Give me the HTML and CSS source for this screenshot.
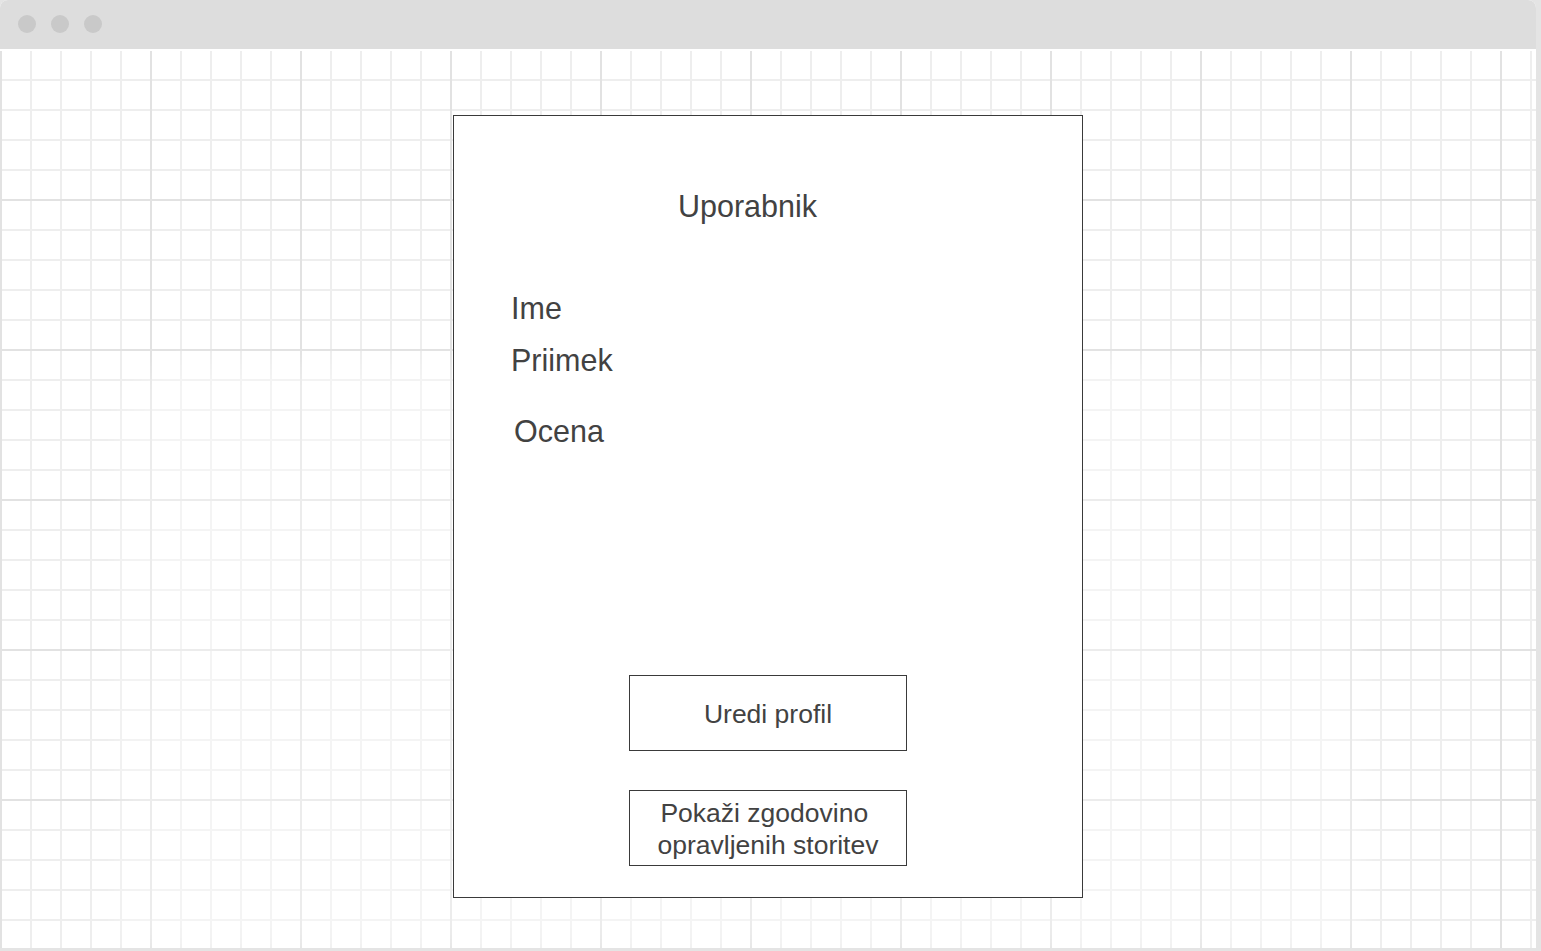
FILE: index.html
```html
<!DOCTYPE html>
<html lang="sl">
<head>
<meta charset="utf-8">
<title>Uporabnik</title>
<link rel="stylesheet" href="styles.css">
</head>
<body>
<div class="window">
  <div class="titlebar">
    <span class="dot"></span>
    <span class="dot"></span>
    <span class="dot"></span>
  </div>
  <div class="canvas">
    <div class="fade"></div>
    <div class="panel">
      <div class="title">Uporabnik</div>
      <div class="field field-ime">Ime</div>
      <div class="field field-priimek">Priimek</div>
      <div class="field field-ocena">Ocena</div>
      <div class="btn btn-first">Uredi profil</div>
      <div class="btn btn-second">Pokaži zgodovino&nbsp;<br>opravljenih storitev</div>
    </div>
  </div>
</div>
</body>
</html>
```

FILE: styles.css
```css
html, body {
  margin: 0;
  padding: 0;
}
body {
  background: #e4e4e4;
  width: 1541px;
  height: 951px;
  overflow: hidden;
  font-family: "Liberation Sans", Arial, sans-serif;
  color: #424242;
}
.window {
  width: 1536px;
  height: 948px;
  background: #fff;
  border-radius: 8px 8px 0 0;
  overflow: hidden;
  display: flex;
  flex-direction: column;
}
.titlebar {
  height: 49px;
  flex: none;
  background: #dddddd;
  display: flex;
  align-items: flex-start;
  gap: 15px;
  padding: 15px 0 0 18px;
  box-sizing: border-box;
}
.dot {
  width: 18px;
  height: 18px;
  border-radius: 50%;
  background: #c9c9c9;
}
.canvas {
  position: relative;
  flex: 1;
  border-top: 2px solid #fff;
  padding: 64px 0 0 453px;
  background-color: #fff;
  background-image:
    linear-gradient(to right, #e2e2e2 2px, transparent 2px),
    linear-gradient(to bottom, #e2e2e2 2px, transparent 2px),
    linear-gradient(to right, #eeeeee 2px, transparent 2px),
    linear-gradient(to bottom, #eeeeee 2px, transparent 2px);
  background-size: 150px 150px, 150px 150px, 30px 30px, 30px 30px;
  background-position: 0 0, 0 148px, 0 0, 0 28px;
}
.fade {
  position: absolute;
  left: 120px;
  top: 314px;
  width: 1240px;
  bottom: 0;
  background: rgba(255, 255, 255, 0.35);
  border-radius: 60px 60px 0 0;
  filter: blur(12px);
  pointer-events: none;
}
.panel {
  position: relative;
  width: 630px;
  height: 783px;
  box-sizing: border-box;
  border: 1px solid #3a3a3a;
  background: #fff;
  display: flex;
  flex-direction: column;
  align-items: flex-start;
}
.title,
.field {
  font-size: 30.5px;
  line-height: 36px;
}
.title {
  margin: 72px 0 0 224px;
}
.field-ime {
  margin: 66px 0 0 57px;
}
.field-priimek {
  margin: 16px 0 0 57px;
}
.field-ocena {
  margin: 35px 0 0 60px;
}
.btn {
  align-self: center;
  width: 278px;
  height: 76px;
  box-sizing: border-box;
  border: 1px solid #3a3a3a;
  padding-top: 2px;
  display: flex;
  align-items: center;
  justify-content: center;
  text-align: center;
  font-size: 26.5px;
  line-height: 32px;
}
.btn-first {
  margin-top: 226px;
}
.btn-second {
  margin-top: 39px;
}
```
